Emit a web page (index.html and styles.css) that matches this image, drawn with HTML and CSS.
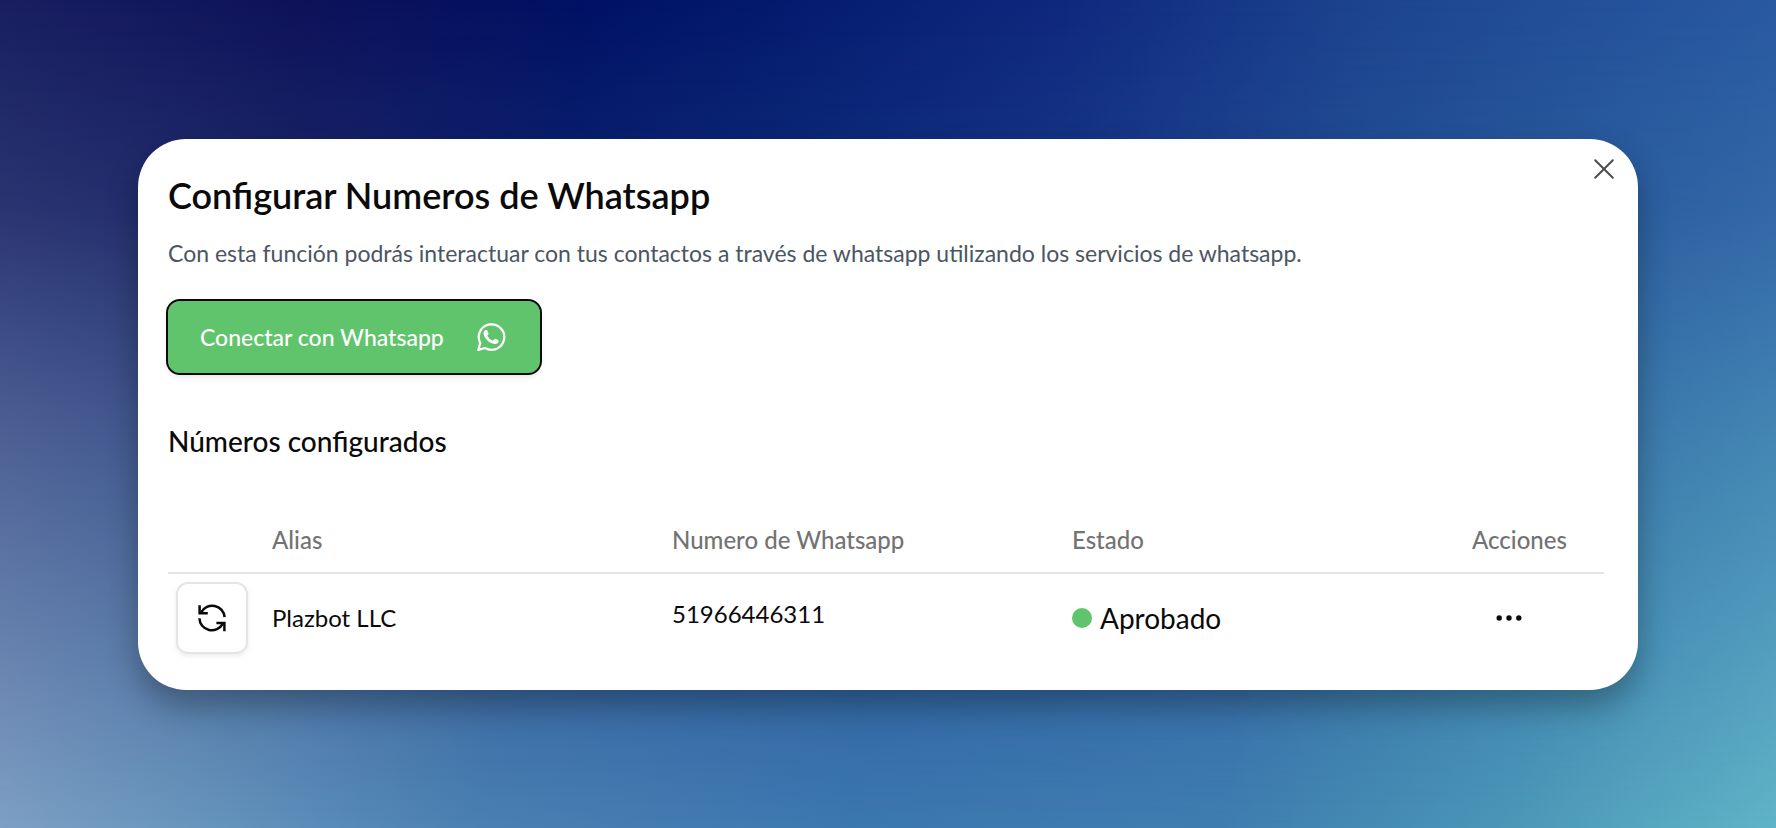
FILE: index.html
```html
<!DOCTYPE html>
<html lang="es">
<head>
<meta charset="utf-8">
<meta name="viewport" content="width=device-width, initial-scale=1">
<title>Configurar Numeros de Whatsapp</title>
<link rel="stylesheet" href="styles.css">
</head>
<body>
<main class="backdrop">
  <section class="dialog" role="dialog" aria-labelledby="dialog-title">
    <button class="close" type="button" aria-label="Cerrar">
      <svg viewBox="0 0 20 20" width="20" height="20" aria-hidden="true"><path d="M1.2 1.2 18.8 18.8M18.8 1.2 1.2 18.8" fill="none" stroke="currentColor" stroke-width="2" stroke-linecap="round"/></svg>
    </button>
    <h1 class="title" id="dialog-title">Configurar Numeros de Whatsapp</h1>
    <p class="description">Con esta función podrás interactuar con tus contactos a través de whatsapp utilizando los servicios de whatsapp.</p>
    <button class="connect" type="button">
      <span>Conectar con Whatsapp</span>
      <svg viewBox="0 0 24 24" width="30" height="30" aria-hidden="true"><path fill="currentColor" d="M17.472 14.382c-.297-.149-1.758-.867-2.03-.967-.273-.099-.471-.148-.67.15-.197.297-.767.966-.94 1.164-.173.199-.347.223-.644.075-.297-.15-1.255-.463-2.39-1.475-.883-.788-1.48-1.761-1.653-2.059-.173-.297-.018-.458.13-.606.134-.133.298-.347.446-.52.149-.174.198-.298.298-.497.099-.198.05-.371-.025-.52-.075-.149-.669-1.612-.916-2.207-.242-.579-.487-.5-.669-.51-.173-.008-.371-.01-.57-.01-.198 0-.52.074-.792.372-.272.297-1.04 1.016-1.04 2.479 0 1.462 1.065 2.875 1.213 3.074.149.198 2.096 3.2 5.077 4.487.709.306 1.262.489 1.694.625.712.227 1.36.195 1.871.118.571-.085 1.758-.719 2.006-1.413.248-.694.248-1.289.173-1.413-.074-.124-.272-.198-.57-.347z"/><path fill="none" stroke="currentColor" stroke-width="1.8" stroke-linejoin="round" d="M1.9 22.3 3.4 16.8A10.2 10.2 0 1 1 7.2 20.8Z"/></svg>
    </button>
    <h2 class="subtitle">Números configurados</h2>
    <table class="numbers">
      <colgroup><col class="col-sync"><col><col><col><col class="col-actions"></colgroup>
      <thead>
        <tr><td></td><th scope="col">Alias</th><th scope="col">Numero de Whatsapp</th><th scope="col">Estado</th><th scope="col">Acciones</th></tr>
      </thead>
      <tbody>
        <tr>
          <td class="sync-cell">
            <button class="sync" type="button" aria-label="Sincronizar">
              <svg viewBox="0 0 28 28" width="28" height="28" aria-hidden="true"><g fill="none" stroke="currentColor" stroke-width="2.5"><path d="M3.2 8.4A12.4 12.4 0 0 1 26.6 13.2M1.4 14.2A12.4 12.4 0 0 0 24.8 19.6"/><path d="M1.6 1.2V9.2H9.8M18.4 19H26.4V27.2"/></g></svg>
            </button>
          </td>
          <td>Plazbot LLC</td>
          <td class="phone">51966446311</td>
          <td><span class="status">Aprobado</span></td>
          <td>
            <button class="more" type="button" aria-label="Más acciones">
              <svg viewBox="0 0 26 6" width="26" height="6" aria-hidden="true"><g fill="currentColor"><circle cx="3.2" cy="3" r="2.7"/><circle cx="13" cy="3" r="2.7"/><circle cx="22.8" cy="3" r="2.7"/></g></svg>
            </button>
          </td>
        </tr>
      </tbody>
    </table>
  </section>
</main>
</body>
</html>
```
FILE: styles.css
```css
* { box-sizing: border-box; }

body {
  margin: 0;
  color: #0a0a0a;
  font-family: "Lato", "Noto Sans", sans-serif;
  font-size: 24px;
  line-height: 32px;
}

button {
  padding: 0;
  border: 0;
  background: none;
  color: inherit;
  font: inherit;
  cursor: pointer;
}

svg { display: block; }

.backdrop {
  position: relative;
  display: flex;
  align-items: center;
  min-height: 100vh;
  padding: 64px 138px;
  background: linear-gradient(95deg, #86a3c9 0%, #6896bd 14%, #4a80b3 30%, #3c78b0 50%, #3f7db0 70%, #4b98b8 86%, #60b4c8 100%);
}

.backdrop::before {
  content: "";
  position: absolute;
  inset: 0;
  background: linear-gradient(92deg, #181e60 0%, #0d1158 17%, #001063 32%, #031a6c 43%, #0f287e 59%, #1c448e 76%, #2a5aa2 100%);
  mask-image: linear-gradient(180deg, #000 0%, rgb(0 0 0 / 83%) 25%, rgb(0 0 0 / 52%) 50%, rgb(0 0 0 / 23%) 78%, transparent 100%);
}

.dialog {
  position: relative;
  flex: 1;
  min-width: 0;
  padding: 34px 34px 28px 30px;
  border-radius: 48px;
  background: #fff;
  box-shadow: 0 16px 32px rgb(0 0 0 / 30%);
}

.close {
  position: absolute;
  top: 20px;
  right: 24px;
  color: #4d4d4d;
}

.title {
  margin: 0 0 20px;
  font-size: 36px;
  font-weight: 600;
  line-height: 44px;
}

.description {
  margin: 0;
  color: #4b5563;
  font-size: 23px;
}

.connect {
  display: flex;
  align-items: center;
  gap: 32px;
  height: 72px;
  margin: 32px 0 48px;
  padding: 0 34px 0 32px;
  border-radius: 12px;
  outline: 2px solid #0a0a0a;
  background: #5fc46b;
  color: #fff;
  font-size: 23px;
  font-weight: 500;
  box-shadow: 0 4px 6px rgb(0 0 0 / 10%);
}

.subtitle {
  margin: 0 0 48px;
  font-size: 28px;
  font-weight: 500;
  line-height: 40px;
}

.numbers {
  width: 100%;
  border-collapse: collapse;
  table-layout: fixed;
}

.col-sync { width: 88px; }
.col-actions { width: 148px; }

.numbers th,
.numbers td {
  padding: 0 16px;
  text-align: left;
}

.numbers th {
  height: 64px;
  color: #737373;
  font-weight: 500;
}

.numbers thead tr { border-bottom: 2px solid #e5e5e5; }

.numbers .sync-cell { padding: 8px; }

.numbers .phone { padding-bottom: 8px; }

.sync {
  display: grid;
  place-items: center;
  width: 72px;
  height: 72px;
  border: 2px solid #e5e5e5;
  border-radius: 12px;
  box-shadow: 0 2px 4px rgb(0 0 0 / 8%);
}

.status {
  display: flex;
  align-items: center;
  gap: 8px;
  font-size: 28px;
}

.status::before {
  content: "";
  width: 20px;
  height: 20px;
  border-radius: 50%;
  background: #5fc46b;
}

.more {
  display: block;
  padding: 12px 24px;
}
```
